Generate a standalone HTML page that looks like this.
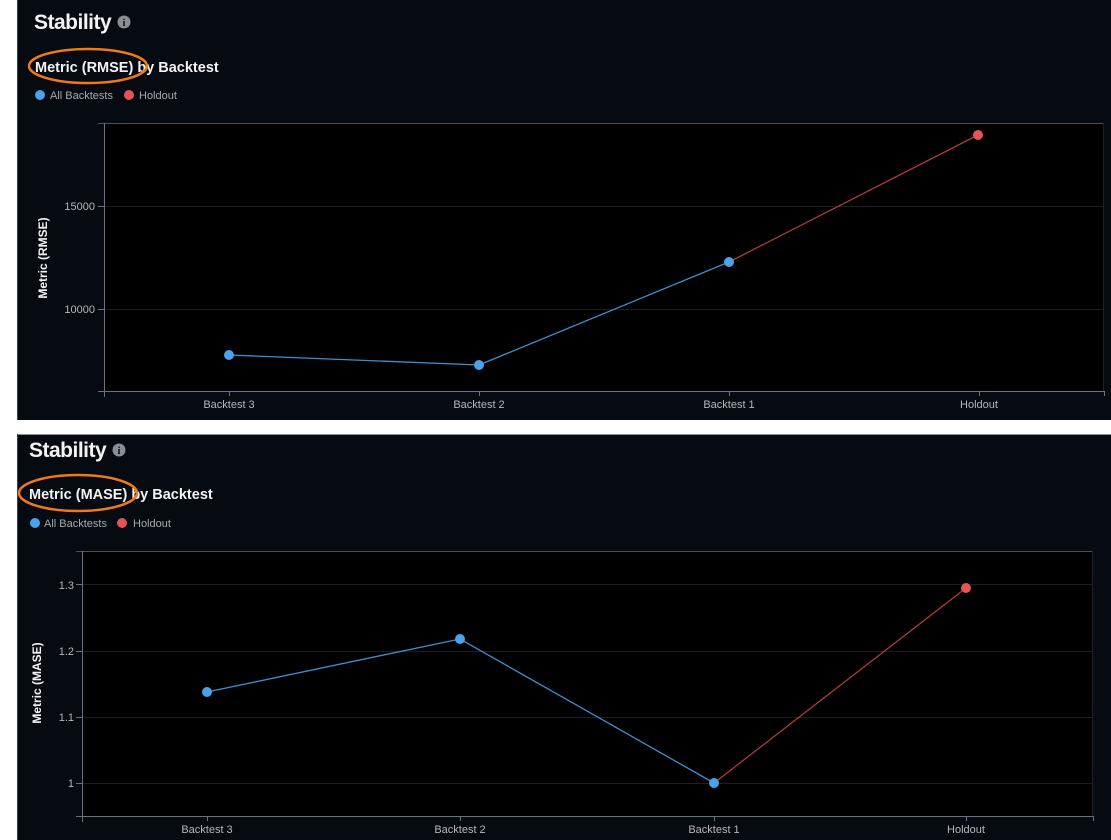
<!DOCTYPE html>
<html><head><meta charset="utf-8"><style>
html,body{margin:0;padding:0;background:#fff;width:1111px;height:840px;overflow:hidden}
svg{display:block;font-family:"Liberation Sans",sans-serif}
</style></head><body>
<svg width="1111" height="840" viewBox="0 0 1111 840">
<rect x="0" y="0" width="1111" height="840" fill="#fff"/>
<rect x="17" y="0" width="1094" height="420" fill="#060a11"/>
<line x1="17.5" y1="0" x2="17.5" y2="420" stroke="#3a4048"/>
<text x="34" y="29" fill="#f2f3f5" font-size="21" font-weight="bold" letter-spacing="-0.5">Stability</text>
<circle cx="124" cy="22" r="6.5" fill="#8a8f96"/><text x="124" y="26" fill="#060a11" font-size="10" font-weight="bold" text-anchor="middle" font-family="Liberation Serif,serif">i</text>
<text x="35" y="72" fill="#f2f3f5" font-size="14.5" font-weight="bold">Metric (RMSE) by Backtest</text>
<ellipse cx="88" cy="66" rx="59" ry="17" fill="none" stroke="#f07a1a" stroke-width="2.5"/>
<circle cx="40" cy="95" r="5" fill="#4aa3e8"/><text x="50" y="99" fill="#a7abb1" font-size="11">All Backtests</text>
<circle cx="129" cy="95" r="5" fill="#e35357"/><text x="139" y="99" fill="#a7abb1" font-size="11">Holdout</text>
<rect x="104" y="123" width="999" height="268" fill="#000"/>
<line x1="98" y1="123.5" x2="1103" y2="123.5" stroke="#4a5260"/>
<line x1="1103.5" y1="123" x2="1103.5" y2="391" stroke="#1e2228"/>
<line x1="104" y1="206.5" x2="1103" y2="206.5" stroke="#1a1d22"/>
<line x1="104" y1="309.5" x2="1103" y2="309.5" stroke="#1a1d22"/>
<line x1="104.5" y1="123" x2="104.5" y2="397" stroke="#68737f"/>
<line x1="98" y1="391.5" x2="1104" y2="391.5" stroke="#68737f"/>
<g stroke="#68737f"><line x1="98" y1="206.5" x2="104" y2="206.5"/><line x1="98" y1="309.5" x2="104" y2="309.5"/>
<line x1="229.5" y1="391" x2="229.5" y2="396"/><line x1="479.5" y1="391" x2="479.5" y2="396"/><line x1="729.5" y1="391" x2="729.5" y2="396"/><line x1="979.5" y1="391" x2="979.5" y2="396"/><line x1="1104.5" y1="391" x2="1104.5" y2="396"/></g>
<g fill="#b5b9be" font-size="11" text-anchor="end"><text x="95" y="210">15000</text><text x="95" y="313">10000</text></g>
<text transform="translate(47,258) rotate(-90)" fill="#f2f3f5" font-size="12" font-weight="bold" text-anchor="middle">Metric (RMSE)</text>
<g fill="#b5b9be" font-size="11" text-anchor="middle"><text x="229" y="408">Backtest 3</text><text x="479" y="408">Backtest 2</text><text x="729" y="408">Backtest 1</text><text x="979" y="408">Holdout</text></g>
<polyline points="229,355 479,365 729,262" fill="none" stroke="#3d8fd0" stroke-width="1.3"/>
<line x1="729" y1="262" x2="978" y2="135" stroke="#b1393c" stroke-width="1.3"/>
<circle cx="229" cy="355" r="5" fill="#4aa3e8"/><circle cx="479" cy="365" r="5" fill="#4aa3e8"/><circle cx="729" cy="262" r="5" fill="#4aa3e8"/><circle cx="978" cy="135" r="5" fill="#e35357"/>
<rect x="17" y="434" width="1094" height="406" fill="#060a11"/>
<line x1="17" y1="434.5" x2="1111" y2="434.5" stroke="#8a9098"/>
<line x1="17.5" y1="434" x2="17.5" y2="840" stroke="#3a4048"/>
<text x="29" y="457" fill="#f2f3f5" font-size="21" font-weight="bold" letter-spacing="-0.5">Stability</text>
<circle cx="119" cy="450" r="6.5" fill="#8a8f96"/><text x="119" y="454" fill="#060a11" font-size="10" font-weight="bold" text-anchor="middle" font-family="Liberation Serif,serif">i</text>
<text x="29" y="499" fill="#f2f3f5" font-size="14.5" font-weight="bold">Metric (MASE) by Backtest</text>
<ellipse cx="78" cy="493" rx="59" ry="18" fill="none" stroke="#f07a1a" stroke-width="2.5"/>
<circle cx="35" cy="523" r="5" fill="#4aa3e8"/><text x="44" y="527" fill="#a7abb1" font-size="11">All Backtests</text>
<circle cx="122" cy="523" r="5" fill="#e35357"/><text x="133" y="527" fill="#a7abb1" font-size="11">Holdout</text>
<rect x="82" y="551" width="1011" height="265" fill="#000"/>
<line x1="76" y1="551.5" x2="1093" y2="551.5" stroke="#4a5260"/>
<line x1="1092.5" y1="551" x2="1092.5" y2="816" stroke="#1e2228"/>
<g stroke="#1a1d22"><line x1="82" y1="584.5" x2="1093" y2="584.5"/><line x1="82" y1="651.5" x2="1093" y2="651.5"/><line x1="82" y1="717.5" x2="1093" y2="717.5"/><line x1="82" y1="783.5" x2="1093" y2="783.5"/></g>
<line x1="82.5" y1="551" x2="82.5" y2="822" stroke="#68737f"/>
<line x1="76" y1="816.5" x2="1093" y2="816.5" stroke="#68737f"/>
<g stroke="#68737f"><line x1="76" y1="584.5" x2="82" y2="584.5"/><line x1="76" y1="651.5" x2="82" y2="651.5"/><line x1="76" y1="717.5" x2="82" y2="717.5"/><line x1="76" y1="783.5" x2="82" y2="783.5"/>
<line x1="207.5" y1="816" x2="207.5" y2="821"/><line x1="460.5" y1="816" x2="460.5" y2="821"/><line x1="714.5" y1="816" x2="714.5" y2="821"/><line x1="966.5" y1="816" x2="966.5" y2="821"/><line x1="1093.5" y1="816" x2="1093.5" y2="821"/></g>
<g fill="#b5b9be" font-size="11" text-anchor="end"><text x="74" y="589">1.3</text><text x="74" y="655">1.2</text><text x="74" y="721">1.1</text><text x="74" y="787">1</text></g>
<text transform="translate(41,683) rotate(-90)" fill="#f2f3f5" font-size="12" font-weight="bold" text-anchor="middle">Metric (MASE)</text>
<g fill="#b5b9be" font-size="11" text-anchor="middle"><text x="207" y="833">Backtest 3</text><text x="460" y="833">Backtest 2</text><text x="714" y="833">Backtest 1</text><text x="966" y="833">Holdout</text></g>
<polyline points="207,692 460,639 714,783" fill="none" stroke="#3d8fd0" stroke-width="1.3"/>
<line x1="714" y1="783" x2="966" y2="588" stroke="#b1393c" stroke-width="1.3"/>
<circle cx="207" cy="692" r="5" fill="#4aa3e8"/><circle cx="460" cy="639" r="5" fill="#4aa3e8"/><circle cx="714" cy="783" r="5" fill="#4aa3e8"/><circle cx="966" cy="588" r="5" fill="#e35357"/>
</svg>
</body></html>
